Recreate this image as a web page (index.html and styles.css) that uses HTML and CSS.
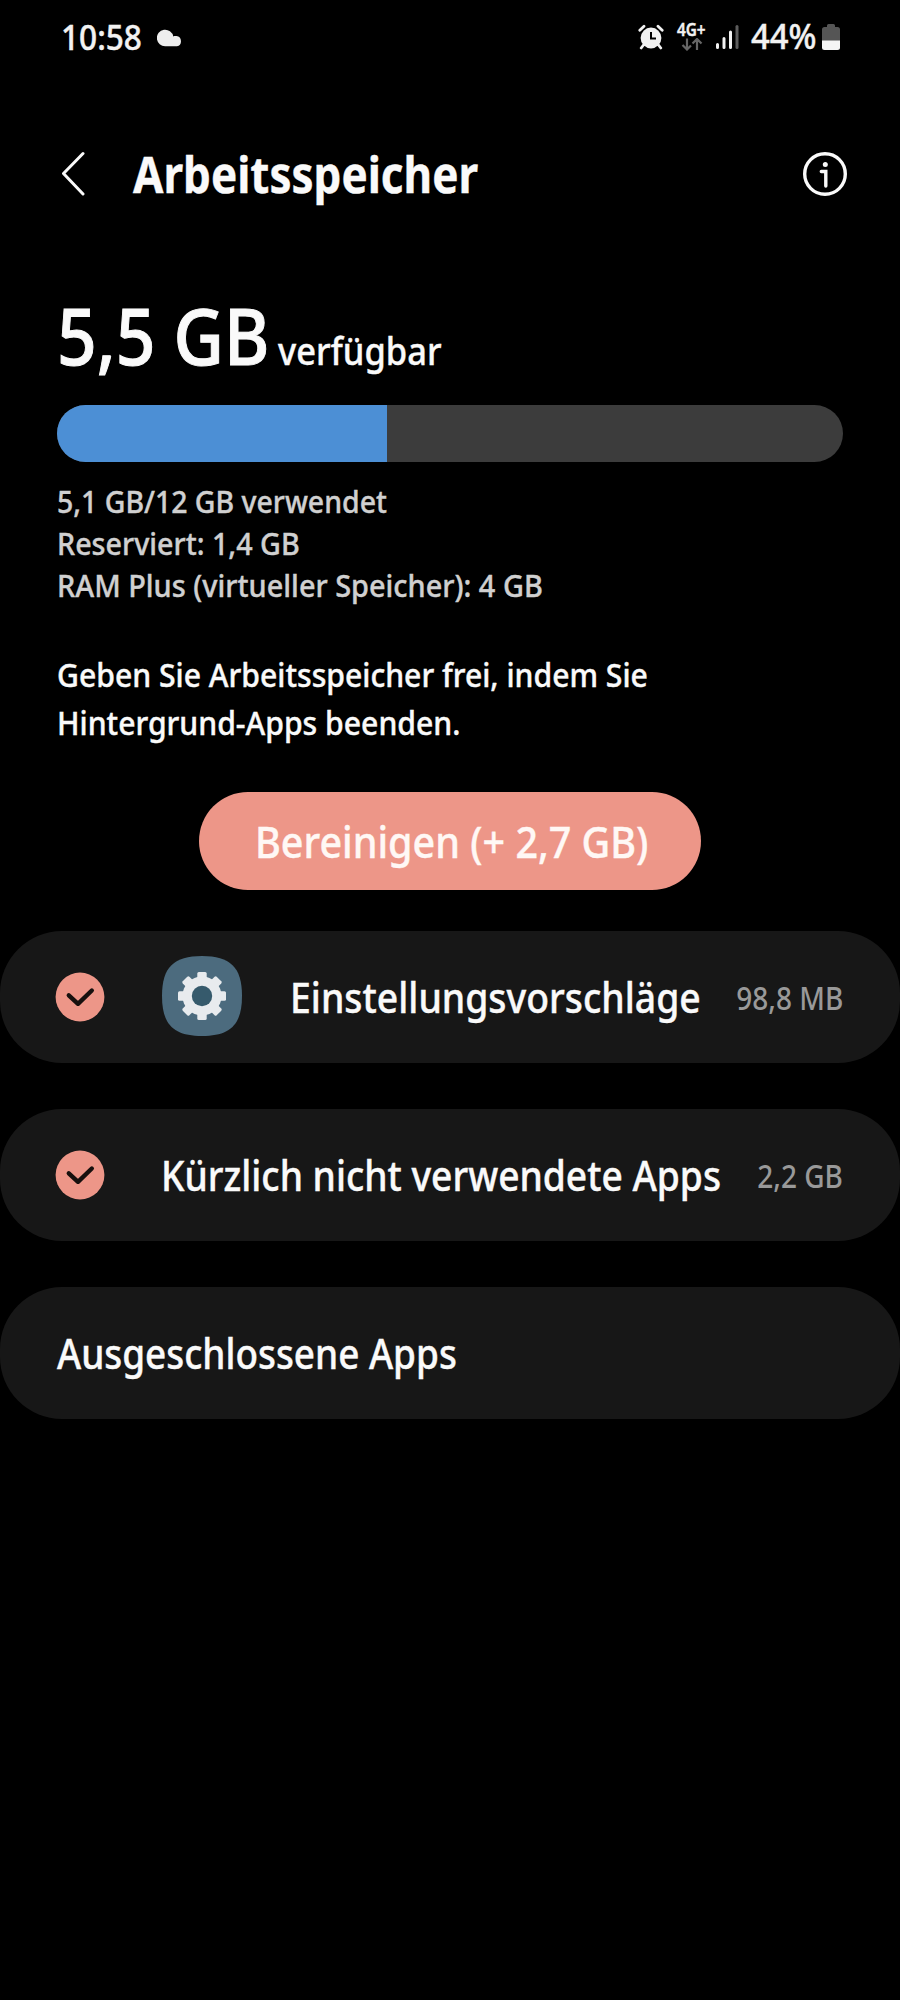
FILE: index.html
```html
<!DOCTYPE html>
<html lang="de">
<head>
<meta charset="utf-8">
<title>Arbeitsspeicher</title>
<link rel="stylesheet" href="styles.css">
</head>
<body>
<div class="statusbar">
  <div class="status-left">
    <span class="time fit">10:58</span>
    <svg class="cloud" viewBox="0 0 26 18"><path d="M8.5 17.3A8.3 8.3 0 1 1 16.3 7.4C17 7.2 18 7 19.5 7.1A5.2 5.2 0 0 1 20 17.3Z"/></svg>
  </div>
  <div class="status-right">
    <svg class="alarm" viewBox="0 0 26 26"><circle cx="13" cy="14" r="10.4" fill="#f2f2f2"/><path d="M1.8 6.2L6 2.2M24.2 6.2L20 2.2M5.5 21L3.2 24M20.5 21L22.800 24" stroke="#f2f2f2" stroke-width="2.800" stroke-linecap="round"/><path d="M13 8V14.500H18" fill="none" stroke="#000" stroke-width="2"/></svg>
    <div class="network">
      <span class="network-type fit">4G+</span>
      <svg class="arrows" viewBox="0 0 22 13"><path d="M6 0.500V11.500M1.500 7L6 11.500L10 7.500M16 12V1M11.500 5.500L16 1L20.500 5.500"/></svg>
    </div>
    <svg class="signal" viewBox="0 0 24 26"><g stroke="#f2f2f2" stroke-width="3" stroke-linecap="round"><path d="M2.500 20.500V23.500M9 14.500V23.500M15.500 8V23.500"/><path d="M22 2.500V23.500" stroke="#5c5c5c"/></g></svg>
    <span class="battery-text fit">44%</span>
    <svg class="battery" viewBox="0 0 18 26"><path d="M5 3V1.500Q5 0 6.500 0H11.500Q13 0 13 1.500V3H15.500Q18 3 18 5.500V17H0V5.500Q0 3 2.500 3Z" fill="#555"/><path d="M0 16.500H18V23.500Q18 26 15.500 26H2.500Q0 26 0 23.500Z" fill="#f5f5f5"/></svg>
  </div>
</div>

<header class="header">
  <svg class="back" viewBox="0 0 24 46"><path d="M22 2.500L2.500 22.500L22 43"/></svg>
  <h1 class="title fit">Arbeitsspeicher</h1>
  <svg class="info" viewBox="0 0 44 44"><circle cx="22" cy="22" r="20.300"/><path d="M18.300 19.500H22.800V34"/><circle class="dot" cx="22.300" cy="12.500" r="2.500"/></svg>
</header>

<main>
  <section class="summary">
    <div class="available"><span class="amount fit">5,5 GB</span><span class="amount-label fit">verfügbar</span></div>
    <div class="bar"><div class="bar-fill" style="width:42%"></div></div>
    <div class="details">
      <div><span class="used fit">5,1 GB/12 GB verwendet</span></div>
      <div><span class="reserved fit">Reserviert: 1,4 GB</span></div>
      <div><span class="ramplus fit">RAM Plus (virtueller Speicher): 4 GB</span></div>
    </div>
    <p class="hint"><span class="fit">Geben Sie Arbeitsspeicher frei, indem Sie</span><br><span class="fit">Hintergrund-Apps beenden.</span></p>
  </section>
  <button class="clean"><span class="clean-label fit">Bereinigen (+ 2,7 GB)</span></button>

  <div class="cards">
    <div class="card">
      <svg class="check" viewBox="0 0 50 50"><circle cx="25" cy="25" r="24.400"/><path d="M13.800 23.300L23 31.800L36.800 18.500"/></svg>
      <svg class="gear" viewBox="0 0 80 80">
        <path d="M40 0C68 0 80 11 80 40S68 80 40 80S0 69 0 40S12 0 40 0Z" fill="#4c6b7e"/>
        <g fill="#e8ebee"><circle cx="40" cy="40" r="19.500"/>
          <g id="teeth"><rect x="35.300" y="16" width="9.400" height="48" rx="1.500"/><rect x="16" y="35.300" width="48" height="9.400" rx="1.500"/></g>
          <use href="#teeth" transform="rotate(45 40 40)"/></g>
        <circle cx="40" cy="40" r="10.200" fill="#365a6c"/>
      </svg>
      <span class="name name-suggestions fit">Einstellungsvorschläge</span>
      <span class="size fit">98,8 MB</span>
    </div>
    <div class="card">
      <svg class="check" viewBox="0 0 50 50"><circle cx="25" cy="25" r="24.400"/><path d="M13.800 23.300L23 31.800L36.800 18.500"/></svg>
      <span class="name name-unused fit">Kürzlich nicht verwendete Apps</span>
      <span class="size fit">2,2 GB</span>
    </div>
    <div class="card card-plain">
      <span class="name fit">Ausgeschlossene Apps</span>
    </div>
  </div>
</main>
</body>
</html>
```
FILE: styles.css
```css
* { box-sizing: border-box; }
body {
  margin: 0;
  width: 900px;
  min-height: 2000px;
  background: #000;
  color: #fafafa;
  font-family: "Noto Sans", "Open Sans", sans-serif;
  font-weight: 500;
}
svg { display: block; flex: none; }

/* Narrowed lettering, anchored at its starting edge */
.fit {
  display: inline-block;
  white-space: nowrap;
  transform: scaleX(var(--sx, 0.9));
  transform-origin: left center;
  -webkit-text-stroke: 0.4px currentColor;
}

.statusbar { height: 74px; display: flex; justify-content: space-between; padding: 0 60px 0 61px; color: #f2f2f2; }
.status-left, .status-right { display: flex; align-items: center; }
.time { width: 96px; font-size: 34px; --sx: 0.93; }
.cloud { width: 26px; height: 18px; margin-top: 2px; fill: #ededed; }
.alarm { width: 26px; height: 26px; margin-right: 13px; }
.network { width: 38px; height: 28px; display: flex; flex-direction: column; gap: 2px; }
.network-type { font-size: 17px; line-height: 13px; font-weight: 600; }
.arrows { width: 22px; height: 13px; margin-left: 4px; fill: none; stroke: #666; stroke-width: 2.2; }
.signal { width: 24px; height: 26px; margin-right: 12px; }
.battery-text { width: 71px; font-size: 34px; line-height: 34px; padding-bottom: 2px; --sx: 0.965; }
.battery { width: 18px; height: 26px; }

.header { height: 200px; display: flex; align-items: center; padding: 0 53px 0 61px; }
.back { width: 24px; height: 46px; fill: none; stroke: #fafafa; stroke-width: 3; stroke-linecap: round; stroke-linejoin: round; }
.title { margin: 0 auto 0 48px; font-size: 50px; font-weight: 700; --sx: 0.88; }
.info { width: 44px; height: 44px; fill: none; stroke: #fafafa; stroke-width: 3.4; stroke-linecap: round; }
.info .dot { fill: #fafafa; stroke: none; }

.summary { padding: 22px 57px 0; }
.available { height: 109px; display: flex; align-items: baseline; line-height: 78px; }
.amount { width: 221px; font-size: 78px; --sx: 0.89; -webkit-text-stroke-width: 1px; }
.amount-label { font-size: 38px; --sx: 0.907; }
.bar { height: 57px; border-radius: 28.5px; background: #3c3c3c; overflow: hidden; }
.bar-fill { height: 100%; background: #4c8fd5; }
.details { margin-top: 18px; font-size: 31.5px; line-height: 42px; color: #d0d0d0; }
.details div { height: 42px; }
.used { --sx: 0.903; }
.reserved { --sx: 0.911; }
.ramplus { --sx: 0.917; }
.hint { margin: 45px 0 0; font-size: 32px; line-height: 47.5px; }
.hint .fit { --sx: 0.942; }

.clean {
  display: flex; align-items: center;
  width: 502px; height: 98px; margin: 46px auto 41px; padding: 0 56px;
  border: 0; border-radius: 49px; background: #ed9688; color: #fff8f5;
  font: inherit; font-size: 43px;
}
.clean-label { --sx: 0.918; }

.cards { display: flex; flex-direction: column; gap: 46px; }
.card { height: 132px; padding: 0 57px 0 55px; display: flex; align-items: center; border-radius: 62px; background: #171717; }
.card-plain { padding-left: 57px; }
.check { width: 50px; height: 50px; margin-right: 56px; fill: #ed9688; }
.check path { fill: none; stroke: #17100e; stroke-width: 4.4; stroke-linecap: round; stroke-linejoin: round; }
.gear { width: 80px; height: 80px; margin: 0 48px 3px 1px; }
.name { flex: 1 1 0; min-width: 0; font-size: 41px; }
.name-suggestions { --sx: 0.911; }
.name-unused { --sx: 0.907; }
.size { flex: none; font-size: 32px; color: #999; --sx: 0.875; transform-origin: right center; -webkit-text-stroke-width: 0; }
```
